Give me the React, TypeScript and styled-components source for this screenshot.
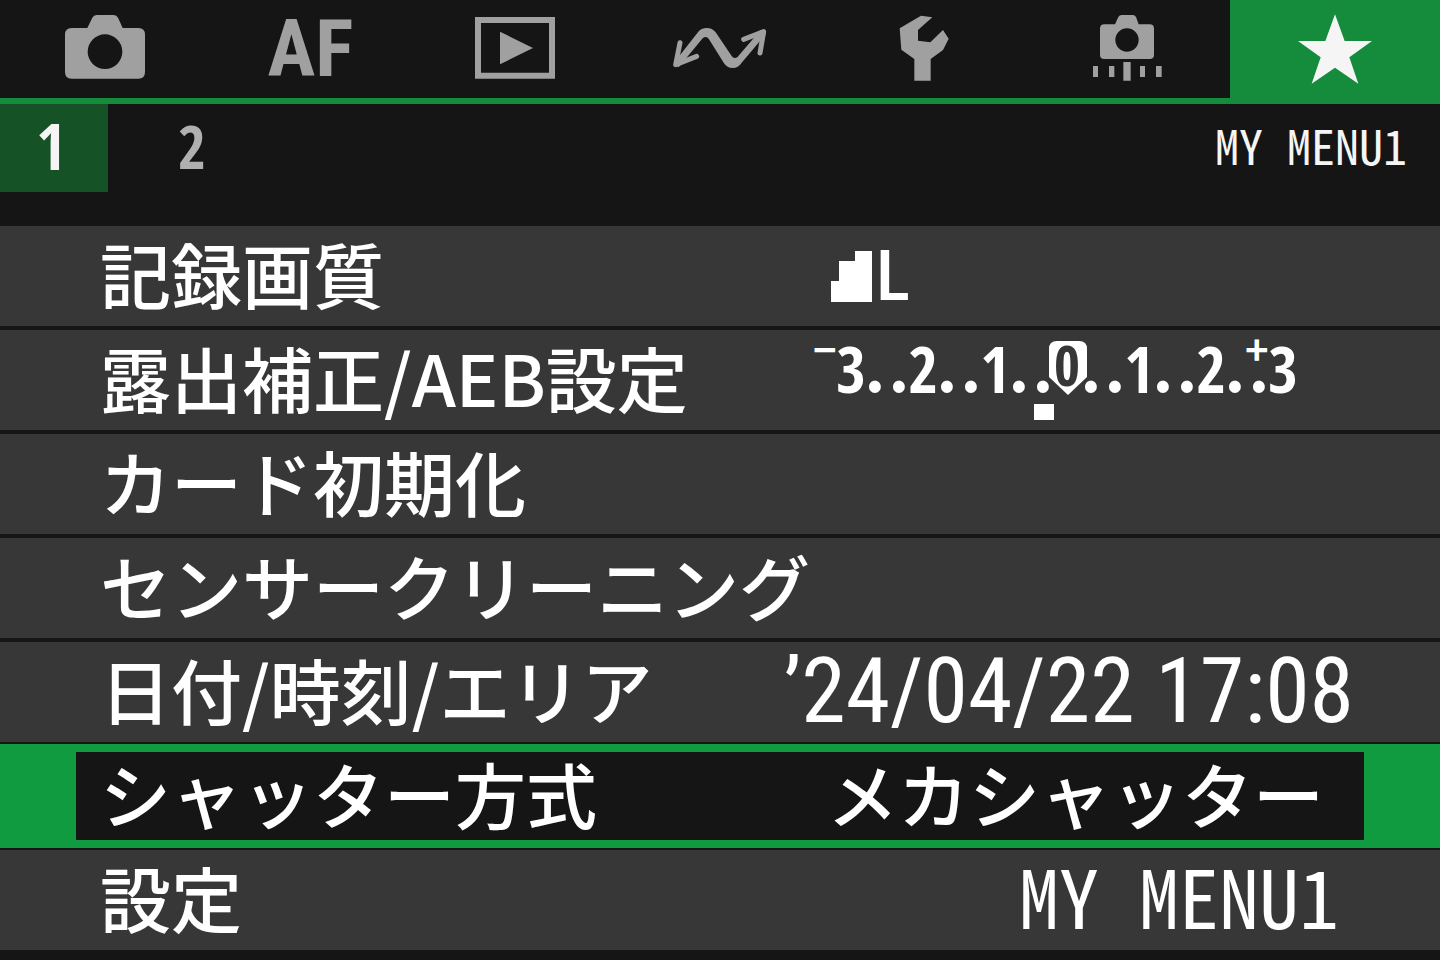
import React from "react";
import styled, { createGlobalStyle, css } from "styled-components";

const color = {
  bg: "#151515",
  row: "#373737",
  green: "#148c3c",
  selected: "#109b40",
  subtab: "#155226",
  icon: "#a0a0a0",
  light: "#f5f5f5",
};

const jp = `"Noto Sans CJK JP", sans-serif`;
const mono = `"Noto Sans Mono CJK JP", "Noto Sans CJK JP", monospace`;
const narrow = `"Roboto Condensed", Roboto, sans-serif`;
const digits = `"Open Sans Condensed", "Open Sans", sans-serif`;

const GlobalStyle = createGlobalStyle`
  *, *::before, *::after { box-sizing: border-box; }
  body { margin: 0; background: ${color.bg}; color: #fff; font-family: ${jp}; }
  button { margin: 0; padding: 0; border: 0; background: none; color: inherit; font: inherit; cursor: pointer; }
`;

const Screen = styled.main`
  min-height: 100vh;
  background: ${color.bg};
  overflow: hidden;
`;

const MainTabs = styled.nav`
  display: grid;
  grid-template-columns: repeat(6, minmax(0, 1fr)) 210px;
  padding-left: 4px;
  border-bottom: 6px solid ${color.green};
`;

const MainTab = styled.button<{ $active?: boolean }>`
  display: flex;
  align-items: center;
  justify-content: center;
  height: 98px;
  background: ${(p) => (p.$active ? color.green : "transparent")};
  color: ${(p) => (p.$active ? color.light : color.icon)};
`;

const TabText = styled.span`
  font: bold 80px/96px ${narrow};
`;

const TabIcon = styled.svg`
  width: 120px;
  height: 98px;
  fill: currentColor;
`;

const SubBar = styled.div`
  display: flex;
  align-items: flex-start;
  gap: 30px;
  height: 122px;
  padding-right: 33px;
`;

const SubTab = styled.button<{ $active?: boolean }>`
  width: 108px;
  height: 88px;
  padding: 0 ${(p) => (p.$active ? 6 : 0)}px 4px 0;
  font: bold ${(p) => (p.$active ? 64 : 60)}px/84px ${digits};
  background: ${(p) => (p.$active ? color.subtab : "transparent")};
  color: ${(p) => (p.$active ? color.light : "#b0b0b0")};
`;

const PageName = styled.h1`
  margin: 0 0 0 auto;
  font: 400 48px/80px ${mono};
  color: ${color.light};
  white-space: pre;
`;

const Menu = styled.ul`
  display: grid;
  gap: 4px;
  margin: 0;
  padding: 0 0 10px;
  list-style: none;
`;

const MenuRow = styled.button<{ $selected?: boolean }>`
  display: flex;
  align-items: center;
  width: 100%;
  height: 100px;
  padding-left: 100px;
  background: ${color.row};
  text-align: left;
  white-space: nowrap;
  ${(p) =>
    p.$selected &&
    css`
      height: 104px;
      margin: -2px 0;
      padding-left: 24px;
      background: ${color.bg};
      border: solid ${color.selected};
      border-width: 8px 76px;
    `}
`;

const MenuItem = styled.li`
  display: flex;
  height: 100px;
`;

const JpText = styled.span`
  padding-bottom: 8px;
  font: 500 71px/78px ${jp};
`;

const Value = styled.span<{ $width?: number; $right?: number }>`
  display: flex;
  align-items: center;
  margin-left: auto;
  padding-right: ${(p) => p.$right ?? 0}px;
  width: ${(p) => (p.$width ? `${p.$width}px` : "auto")};
`;

const DateText = styled.span`
  font: 400 90px/88px ${narrow};
`;

const SizeText = styled.span`
  font: 500 71px/88px ${narrow};
`;

const MonoText = styled.span`
  padding-bottom: 12px;
  font: 400 80px/78px ${mono};
  white-space: pre;
`;

const Quality = styled.svg`
  width: 41px;
  height: 51px;
  margin-right: 4px;
  fill: #fff;
`;

const Scale = styled.span`
  position: relative;
  display: grid;
  grid-template-columns: repeat(19, 24px);
  height: 100px;
  margin-left: 25px;
`;

const Mark = styled.span<{ $dot?: boolean }>`
  display: flex;
  justify-content: center;
  font: ${(p) => (p.$dot ? `bold 64px/68px ${jp}` : `bold 64px/78px ${digits}`)};
`;

const Sign = styled.span<{ $left: number }>`
  position: absolute;
  top: 0;
  left: ${(p) => p.$left}px;
  font: bold 40px/36px ${jp};
`;

const Zero = styled.span`
  position: relative;
  display: flex;
  justify-content: center;
  font: bold 56px/68px ${digits};
  color: ${color.row};
`;

const Shield = styled.svg`
  position: absolute;
  top: 11px;
  left: -6px;
  width: 38px;
  height: 54px;
  fill: #fff;
`;

const ZeroText = styled.span`
  position: relative;
`;

const Pointer = styled.span`
  position: absolute;
  top: 74px;
  left: 195px;
  width: 20px;
  height: 16px;
  background: #fff;
`;

const CameraIcon = () => (
  <TabIcon viewBox="18 0 360 294">
    <path
      fillRule="evenodd"
      d="M95 84H142L157 53Q161 45 170 45H221Q230 45 234 53L248 84H295Q315 84 315 104V216Q315 236 295 236H95Q75 236 75 216V104Q75 84 95 84ZM195 103A52 52 0 1 0 195 207A52 52 0 1 0 195 103Z"
    />
  </TabIcon>
);

const PlayIcon = () => (
  <TabIcon viewBox="15 0 360 294">
    <path fillRule="evenodd" d="M75 51H315V236H75ZM93 69V218H297V69Z" />
    <path d="M150 95L249 144L150 193Z" />
  </TabIcon>
);

const WirelessIcon = () => (
  <TabIcon viewBox="627 0 360 294">
    <path d="M672 188L745 95Q754 84 770 84Q787 84 797 97L845 168Q851 178 862 172L932 90L948 102L875 188Q865 204 848 204Q831 204 822 190L777 118Q769 106 758 115L686 202Z" />
    <path
      d="M690 128L677 194L740 169M881 118L941 95L930 159"
      fill="none"
      stroke="currentColor"
      strokeWidth="15"
      strokeLinecap="round"
      strokeLinejoin="round"
    />
  </TabIcon>
);

const WrenchIcon = () => (
  <TabIcon viewBox="-22 0 360 294">
    <path d="M152 47L186 52L143 90V122L180 127L218 90L235 116L218 150L181 177V242H132V177L93 149L88 85Z" />
  </TabIcon>
);

const CustomIcon = () => (
  <TabIcon viewBox="594 0 360 294">
    <path
      fillRule="evenodd"
      d="M703 73H735L745 51Q748 45 755 45H788Q795 45 798 51L806 73H839Q852 73 852 86V164Q852 177 839 177H703Q690 177 690 164V86Q690 73 703 73ZM771 85A35 35 0 1 0 771 155A35 35 0 1 0 771 85Z"
    />
    <path d="M669 198H684V231H669ZM717 198H733V231H717ZM760 186H782V242H760ZM810 198H825V231H810ZM858 198H875V231H858Z" />
  </TabIcon>
);

const StarIcon = () => (
  <TabIcon viewBox="225 0 360 294">
    <path d="M405 43L434 123H516L448 172L475 251L405 203L335 251L362 172L294 123H376Z" />
  </TabIcon>
);

const tabs = [
  { name: "撮影", icon: <CameraIcon /> },
  { name: "AF", icon: <TabText>AF</TabText> },
  { name: "再生", icon: <PlayIcon /> },
  { name: "通信", icon: <WirelessIcon /> },
  { name: "機能設定", icon: <WrenchIcon /> },
  { name: "カスタム機能", icon: <CustomIcon /> },
  { name: "マイメニュー", icon: <StarIcon />, active: true },
];

const ExposureScale = () => (
  <Scale>
    <Sign $left={-26}>−</Sign>
    {"3..2..1..0..1..2..3".split("").map((c, i) =>
      c === "0" ? (
        <Zero key={i}>
          <Shield viewBox="0 0 38 54">
            <path d="M8 0H30Q38 0 38 8V36L19 54L0 36V8Q0 0 8 0Z" />
          </Shield>
          <ZeroText>0</ZeroText>
        </Zero>
      ) : (
        <Mark key={i} $dot={c === "."}>
          {c}
        </Mark>
      )
    )}
    <Sign $left={406}>+</Sign>
    <Pointer />
  </Scale>
);

const rows = [
  {
    label: "記録画質",
    value: (
      <Value $width={609}>
        <Quality viewBox="0 0 41 51">
          <path d="M0 30H8V10H24V0H41V51H0Z" />
        </Quality>
        <SizeText>L</SizeText>
      </Value>
    ),
  },
  {
    label: "露出補正/AEB設定",
    value: (
      <Value $width={626}>
        <ExposureScale />
      </Value>
    ),
  },
  { label: "カード初期化" },
  { label: "センサークリーニング" },
  {
    label: "日付/時刻/エリア",
    value: (
      <Value $right={86}>
        <DateText>’24/04/22 17:08</DateText>
      </Value>
    ),
  },
  {
    label: "シャッター方式",
    selected: true,
    value: (
      <Value $right={40}>
        <JpText>メカシャッター</JpText>
      </Value>
    ),
  },
  {
    label: "設定",
    value: (
      <Value $right={101}>
        <MonoText>MY MENU1</MonoText>
      </Value>
    ),
  },
];

export default function App() {
  return (
    <Screen>
      <GlobalStyle />
      <MainTabs>
        {tabs.map((t) => (
          <MainTab key={t.name} aria-label={t.name} $active={t.active}>
            {t.icon}
          </MainTab>
        ))}
      </MainTabs>
      <SubBar>
        <SubTab $active>1</SubTab>
        <SubTab>2</SubTab>
        <PageName>MY MENU1</PageName>
      </SubBar>
      <Menu>
        {rows.map((r) => (
          <MenuItem key={r.label}>
            <MenuRow $selected={r.selected}>
              <JpText>{r.label}</JpText>
              {r.value}
            </MenuRow>
          </MenuItem>
        ))}
      </Menu>
    </Screen>
  );
}
